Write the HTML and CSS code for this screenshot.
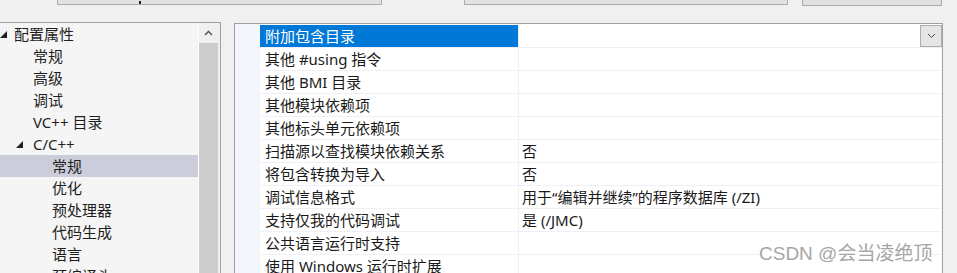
FILE: index.html
```html
<!DOCTYPE html>
<html lang="zh-CN">

<head>
    <meta charset="UTF-8">
    <meta name="viewport" content="width=device-width, initial-scale=1.0">
    <title>C/C++ 常规 属性页</title>
    <link rel="stylesheet" href="styles.css">
</head>

<body>
    <!-- top combos, mostly scrolled off -->
    <div class="toolbar">
        <div class="combo combo-config"><span class="tail"></span></div>
        <div class="combo combo-platform"></div>
        <div class="combo btn-manager"></div>
    </div>

    <div class="main">
        <div class="tree-panel">
            <ul class="tree">
                <li class="item lvl0 open">
                    <svg class="twisty" width="7" height="7" viewBox="0 0 7 7"><polygon points="7,0 7,7 0,7"/></svg>配置属性
                </li>
                <li class="item lvl1">常规</li>
                <li class="item lvl1">高级</li>
                <li class="item lvl1">调试</li>
                <li class="item lvl1">VC++ 目录</li>
                <li class="item lvl1 open">
                    <svg class="twisty" width="7" height="7" viewBox="0 0 7 7"><polygon points="7,0 7,7 0,7"/></svg>C/C++
                </li>
                <li class="item lvl2 selected">常规</li>
                <li class="item lvl2">优化</li>
                <li class="item lvl2">预处理器</li>
                <li class="item lvl2">代码生成</li>
                <li class="item lvl2">语言</li>
                <li class="item lvl2">预编译头</li>
            </ul>
            <div class="vscroll">
                <div class="arrow-up">
                    <svg width="9" height="6" viewBox="0 0 9 6"><polyline points="1,5 4.5,1.5 8,5" fill="none" stroke="#606060" stroke-width="1.6"/></svg>
                </div>
                <div class="thumb"></div>
            </div>
        </div>

        <div class="grid">
            <div class="gutter"></div>
            <div class="rows">
                <div class="row selected">
                    <div class="name">附加包含目录</div>
                    <div class="value">
                        <span class="drop"><svg width="9" height="6" viewBox="0 0 9 6"><polyline points="1,1 4.5,4.5 8,1" fill="none" stroke="#444" stroke-width="1"/></svg></span>
                    </div>
                </div>
                <div class="row"><div class="name">其他 #using 指令</div><div class="value"></div></div>
                <div class="row"><div class="name">其他 BMI 目录</div><div class="value"></div></div>
                <div class="row"><div class="name">其他模块依赖项</div><div class="value"></div></div>
                <div class="row"><div class="name">其他标头单元依赖项</div><div class="value"></div></div>
                <div class="row"><div class="name">扫描源以查找模块依赖关系</div><div class="value">否</div></div>
                <div class="row"><div class="name">将包含转换为导入</div><div class="value">否</div></div>
                <div class="row"><div class="name">调试信息格式</div><div class="value">用于“编辑并继续”的程序数据库 (/ZI)</div></div>
                <div class="row"><div class="name">支持仅我的代码调试</div><div class="value">是 (/JMC)</div></div>
                <div class="row"><div class="name">公共语言运行时支持</div><div class="value"></div></div>
                <div class="row"><div class="name">使用 Windows 运行时扩展</div><div class="value"></div></div>
            </div>
        </div>
    </div>

    <div class="watermark">CSDN @会当凌绝顶</div>
</body>

</html>
```

FILE: styles.css
```css
body {
    margin: 0;
    height: 273px;
    overflow: hidden;
    position: relative;
    background: #f0f0f0;
    color: #1a1a1a;
    font-family: "Noto Sans", "Noto Sans CJK SC", sans-serif;
    font-size: 15px;
}

.toolbar {
    display: flex;
    align-items: flex-end;
    height: 6px;
}

.combo {
    flex: none;
    height: 24px;
    box-sizing: border-box;
    border: 1px solid #adadad;
    background: #e1e1e1;
    position: relative;
}

.combo-config {
    margin-left: 57px;
    width: 325px;
    margin-bottom: 1px;
}

.combo-config .tail {
    position: absolute;
    left: 81px;
    bottom: 0;
    width: 2px;
    height: 3px;
    background: #222;
}

.combo-platform {
    margin-left: 82px;
    width: 324px;
    margin-bottom: 1px;
}

.btn-manager {
    margin-left: 14px;
    width: 140px;
}

.main {
    display: flex;
    align-items: flex-start;
    margin-top: 16px;
}

/* tree on the left */
.tree-panel {
    display: flex;
    width: 222px;
    height: 300px;
    margin-left: -1px;
    box-sizing: border-box;
    border: 1px solid #a0a0a0;
    background: #f5f5f5;
}

.tree {
    width: 198px;
    margin: 0;
    padding: 0;
    list-style: none;
}

.item {
    display: flex;
    align-items: center;
    height: 22px;
    line-height: 22px;
    white-space: nowrap;
    color: #1e1e1e;
}

.twisty {
    flex: none;
    fill: #1e1e1e;
}

.lvl0 .twisty {
    margin-right: 7px;
}

.lvl1 {
    padding-left: 33px;
}

.lvl1.open {
    padding-left: 16px;
}

.lvl1.open .twisty {
    margin-right: 10px;
}

.lvl2 {
    padding-left: 52px;
}

.item.selected {
    background: #cbcdda;
}

.vscroll {
    display: flex;
    flex-direction: column;
    width: 19px;
    border-left: 1px solid #fff;
    padding-right: 2px;
    background: #f0f0f0;
}

.arrow-up {
    display: flex;
    align-items: center;
    justify-content: center;
    height: 20px;
}

.thumb {
    flex: 1;
    background: #cdcdcd;
}

/* property grid */
.grid {
    display: flex;
    width: 709px;
    height: 300px;
    margin-left: 13px;
    margin-top: 1px;
    box-sizing: border-box;
    border: 1px solid #a0a0a0;
    background: #fff;
}

.gutter {
    width: 25px;
    background: #f3f6fb;
}

.rows {
    flex: 1;
}

.row {
    display: flex;
    height: 23px;
    box-sizing: border-box;
    border-top: 1px solid #edf0f6;
    line-height: 22px;
    white-space: nowrap;
}

.row:first-child {
    border-top-color: #fff;
}

.name {
    width: 259px;
    box-sizing: border-box;
    padding-left: 5px;
    border-right: 1px solid #edf0f6;
}

.value {
    flex: 1;
    display: flex;
    padding-left: 3px;
}

.row.selected .name {
    background: #0078d7;
    color: #fff;
}

.drop {
    display: flex;
    align-items: center;
    justify-content: center;
    width: 22px;
    height: 22px;
    margin-left: auto;
    box-sizing: border-box;
    border: 1px solid #adadad;
    background: #e5e5e5;
}

.watermark {
    position: absolute;
    left: 759px;
    top: 243px;
    line-height: 22px;
    font-family: "Liberation Sans", "Noto Sans CJK SC", sans-serif;
    font-size: 19px;
    color: #a6a6a6;
    background: rgba(255, 255, 255, 0.85);
}
```
